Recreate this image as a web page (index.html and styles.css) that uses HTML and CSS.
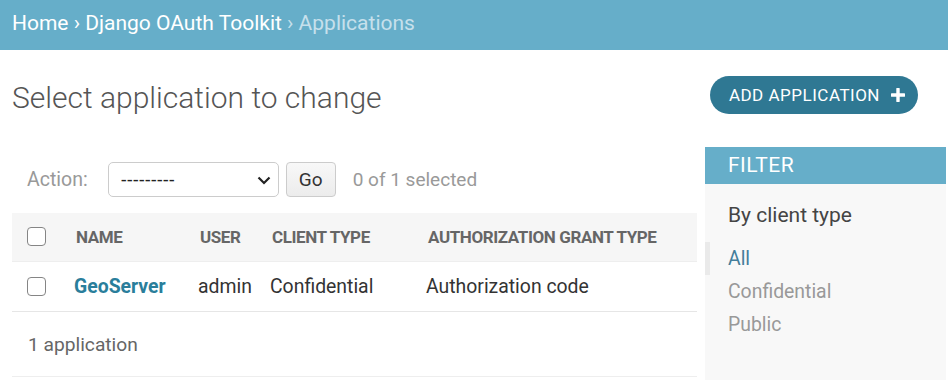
FILE: index.html
```html
<!DOCTYPE html>
<html lang="en">
<head>
    <meta charset="UTF-8">
    <meta name="viewport" content="width=device-width, initial-scale=1.0">
    <title>Select application to change</title>
    <link rel="stylesheet" href="styles.css">
</head>
<body>
    <div class="breadcrumbs">
        <a href="#">Home</a> &rsaquo; <a href="#">Django OAuth Toolkit</a> <span class="current">&rsaquo; Applications</span>
    </div>

    <div class="content">
        <div class="top">
            <h1>Select application to change</h1>
            <a href="#" class="btn-add">ADD APPLICATION <span class="plus">
                <svg width="14" height="14" viewBox="0 0 14 14"><path d="M7 1v12M1 7h12" stroke="#fff" stroke-width="3.4" stroke-linecap="round"/></svg>
            </span></a>
        </div>

        <div class="changelist">
            <div class="results">
                <div class="actions">
                    <label for="action">Action:</label>
                    <div class="select-wrap">
                        <select id="action">
                            <option>---------</option>
                        </select>
                        <svg class="chevron" width="14" height="9" viewBox="0 0 14 9"><path d="M1.5 1.5l5.5 5.5 5.5-5.5" fill="none" stroke="#222" stroke-width="2.2"/></svg>
                    </div>
                    <button type="button" class="btn-go">Go</button>
                    <span class="counter">0 of 1 selected</span>
                </div>

                <table class="result-list">
                    <colgroup>
                        <col style="width: 47px">
                        <col style="width: 124px">
                        <col style="width: 72px">
                        <col style="width: 156px">
                        <col>
                    </colgroup>
                    <thead>
                        <tr>
                            <th><input type="checkbox" class="check"></th>
                            <th><span class="text">Name</span></th>
                            <th><span class="text">User</span></th>
                            <th><span class="text">Client type</span></th>
                            <th><span class="text">Authorization grant type</span></th>
                        </tr>
                    </thead>
                    <tbody>
                        <tr>
                            <td><input type="checkbox" class="check"></td>
                            <td><a href="#" class="name-link">GeoServer</a></td>
                            <td>admin</td>
                            <td>Confidential</td>
                            <td>Authorization code</td>
                        </tr>
                    </tbody>
                </table>

                <p class="paginator">1 application</p>
            </div>

            <div class="filter">
                <h2>FILTER</h2>
                <h3>By client type</h3>
                <ul>
                    <li class="selected"><a href="#">All</a></li>
                    <li><a href="#">Confidential</a></li>
                    <li><a href="#">Public</a></li>
                </ul>
            </div>
        </div>
    </div>
</body>
</html>
```

FILE: styles.css
```css
* {
    margin: 0;
    padding: 0;
    box-sizing: border-box;
}

body {
    font-family: Roboto, 'Liberation Sans', sans-serif;
    color: #333;
    background: white;
}

a {
    text-decoration: none;
}

.breadcrumbs {
    height: 50px;
    line-height: 46px;
    padding-left: 12px;
    background: #66aec9;
    color: #ffffff;
    font-size: 21px;
}

.breadcrumbs a {
    color: #ffffff;
}

.breadcrumbs .current {
    color: #c6e0ec;
}

.content {
    padding: 0 2px 0 12px;
}

.top {
    display: flex;
    justify-content: space-between;
    align-items: flex-start;
    height: 64px;
    padding: 26px 28px 0 0;
}

.top h1 {
    font-size: 30px;
    font-weight: 300;
    color: #555;
    line-height: 38px;
    margin-top: 3px;
}

.btn-add {
    display: flex;
    align-items: center;
    height: 38px;
    padding: 0 13px 0 19px;
    border-radius: 19px;
    background: #2f7893;
    color: white;
    font-size: 17px;
    letter-spacing: 0.5px;
}

.btn-add .plus {
    display: flex;
    margin-left: 11px;
}

.changelist {
    display: flex;
    gap: 8px;
    margin-top: 33px;
}

.results {
    width: 685px;
}

.actions {
    display: flex;
    align-items: center;
    padding: 15px 0 0 15px;
    height: 50px;
    font-size: 19px;
}

.actions label {
    color: #999;
    font-size: 19.5px;
    margin-right: 20px;
}

.select-wrap {
    position: relative;
    display: flex;
}

.select-wrap select {
    appearance: none;
    width: 171px;
    height: 35px;
    padding: 0 30px 0 12px;
    border: 1px solid #ccc;
    border-radius: 5px;
    background: white;
    font-family: 'Liberation Sans', Arial, sans-serif;
    font-size: 18px;
    color: #222;
}

.select-wrap .chevron {
    position: absolute;
    right: 8px;
    top: 14px;
    pointer-events: none;
}

.btn-go {
    height: 35px;
    width: 50px;
    margin-left: 7px;
    border: 1px solid #ccc;
    border-radius: 4px;
    background: linear-gradient(#f8f8f8, #ececec);
    font-family: Roboto, sans-serif;
    font-size: 19px;
    color: #333;
}

.counter {
    margin-left: 17px;
    color: #999;
}

.result-list {
    width: 100%;
    margin-top: 16px;
    border-collapse: collapse;
    table-layout: fixed;
    font-size: 19.4px;
}

.result-list thead th {
    height: 48px;
    background: #f6f6f6;
    border-bottom: 1px solid #eee;
    text-align: left;
    font-size: 17px;
    font-weight: 700;
    color: #666;
    text-transform: uppercase;
    letter-spacing: -0.4px;
    padding-left: 15px;
}

.result-list thead th .text {
    padding-left: 2px;
}

.result-list td {
    height: 50px;
    padding-left: 15px;
    border-bottom: 1px solid #e6e6e6;
    color: #333;
}

.check {
    appearance: none;
    display: block;
    width: 19px;
    height: 19px;
    border: 1px solid #858585;
    border-radius: 4px;
    background: white;
}

.name-link {
    color: #2a7e9b;
    font-weight: 700;
}

.paginator {
    height: 65px;
    line-height: 66px;
    padding-left: 16px;
    font-size: 19.2px;
    color: #666;
    border-bottom: 1px solid #eee;
}

.filter {
    width: 241px;
    background: #f8f8f8;
    height: 233px;
}

.filter h2 {
    height: 37px;
    line-height: 37px;
    padding-left: 23px;
    background: #66aec9;
    color: white;
    font-size: 21px;
    font-weight: 400;
    letter-spacing: 0.5px;
}

.filter h3 {
    padding: 17px 0 0 23px;
    font-size: 21px;
    font-weight: 400;
    color: #444;
    line-height: 28px;
}

.filter ul {
    list-style: none;
    margin-top: 13px;
}

.filter li {
    padding-left: 23px;
    line-height: 33px;
    font-size: 19.4px;
}

.filter li a {
    color: #999;
}

.filter li.selected {
    border-left: 5px solid #eaeaea;
    padding-left: 18px;
}

.filter li.selected a {
    color: #447e9b;
}
```
